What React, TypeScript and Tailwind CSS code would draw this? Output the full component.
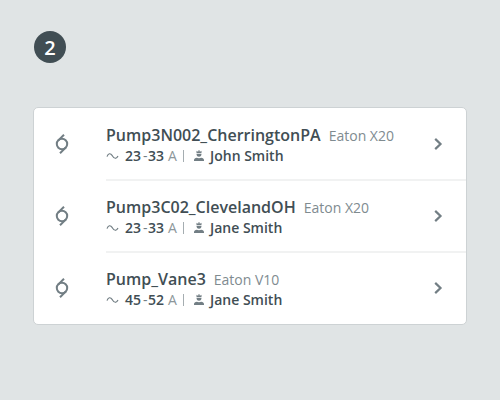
type Pump = {
  name: string;
  model: string;
  min: number;
  max: number;
  owner: string;
};

const pumps: Pump[] = [
  { name: "Pump3N002_CherringtonPA", model: "Eaton X20", min: 23, max: 33, owner: "John Smith" },
  { name: "Pump3C02_ClevelandOH", model: "Eaton X20", min: 23, max: 33, owner: "Jane Smith" },
  { name: "Pump_Vane3", model: "Eaton V10", min: 45, max: 52, owner: "Jane Smith" },
];

function PumpIcon() {
  return (
    <svg width="14" height="22" viewBox="0 0 14 22" fill="none" stroke="#727e84" strokeWidth="2">
      <circle cx="7" cy="11" r="5.2" />
      <path d="M3.300 7.400 9 1.700M10.700 14.600 5 20.300" />
    </svg>
  );
}

function WaveIcon() {
  return (
    <svg width="13" height="8" viewBox="0 0 13 8" fill="none" stroke="#727e84" strokeWidth="1.2">
      <path d="M1 4.600C2.200 1.400 4.300 .6 6.300 3.700C8.300 7.100 10.400 7.100 12 3.900" />
    </svg>
  );
}

function OperatorIcon() {
  return (
    <svg width="12" height="12" viewBox="0 0 12 12" fill="#727e84">
      <path d="M5.400.2h1.200v1.200h.8L8.500.7v2.200h-5V.7l1.100.7h.8zM3.500 3.700h5c0 1.900-.8 3-2.500 3s-2.500-1.100-2.500-3zM1 11V9.900C1 8.700 2.200 8 3.800 7.700c1.200.6 3.200.6 4.400 0C9.800 8 11 8.700 11 9.900V11z" />
    </svg>
  );
}

function ChevronIcon() {
  return (
    <svg width="10" height="14" viewBox="0 0 10 14" fill="none" stroke="#727e84" strokeWidth="2.2">
      <path d="M2.200 1.900 7.500 7 2.200 12.100" />
    </svg>
  );
}

function PumpRow({ pump }: { pump: Pump }) {
  return (
    <li className="group relative flex h-[72px] pl-[21px]">
      <div className="flex w-[51px] items-center">
        <PumpIcon />
      </div>
      <div className="flex flex-1 items-center pr-[23px]">
        <div className="flex-1 pt-px whitespace-nowrap">
          <div className="flex h-[22px] items-baseline gap-2 leading-[22px]">
            <span className="text-[16px] font-semibold">{pump.name}</span>
            <span className="text-[14px] text-[#808b90]">{pump.model}</span>
          </div>
          <div className="flex h-5 items-center text-[14px] leading-5">
            <span className="w-[19px]"><WaveIcon /></span>
            <span className="w-[18px] font-semibold">{pump.min}</span>
            <span className="w-[5px] text-[#727e84]">-</span>
            <span className="w-5 font-semibold">{pump.max}</span>
            <span className="w-[15px] text-[#8d979b]">A</span>
            <span className="mr-[9px] h-3 w-px bg-[#a5adb1]" />
            <span className="w-[17px]"><OperatorIcon /></span>
            <span className="font-semibold">{pump.owner}</span>
          </div>
        </div>
        <ChevronIcon />
      </div>
      <span className="absolute right-0 -bottom-px left-[72px] h-0.5 bg-[#f1f2f2] group-last:hidden" />
    </li>
  );
}

export default function App() {
  return (
    <main className="h-[400px] w-[500px] bg-[#e0e4e5] px-[33px] pt-[31px] font-['Open_Sans',sans-serif] text-[#414e54]">
      <div className="ml-px flex size-8 items-center justify-center rounded-full bg-[#414e54] text-[20px] font-semibold text-white">
        <span className="translate-y-px">2</span>
      </div>
      <ul className="mt-11 rounded-[5px] border border-[#cdd2d4] bg-white">
        {pumps.map((pump) => (
          <PumpRow key={pump.name} pump={pump} />
        ))}
      </ul>
    </main>
  );
}
